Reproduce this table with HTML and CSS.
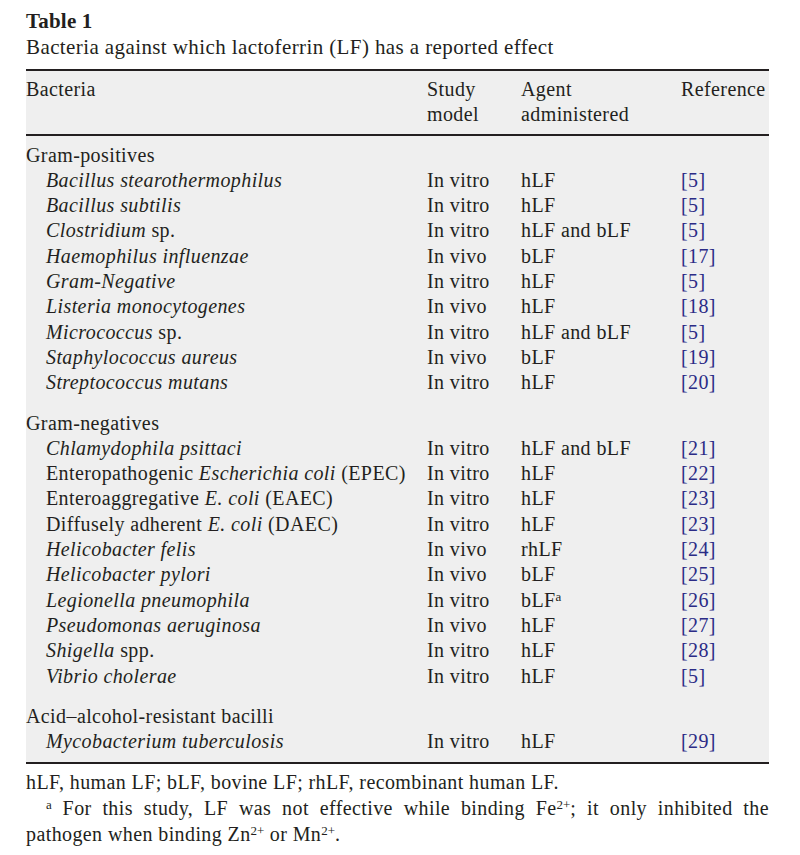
FILE: index.html
```html
<!DOCTYPE html>
<html>
<head>
<meta charset="utf-8">
<link rel="stylesheet" href="styles.css">
</head>
<body>
<div class="page">
  <div class="caption">
    <div class="label">Table 1</div>
    <div class="title">Bacteria against which lactoferrin (LF) has a reported effect</div>
  </div>
  <table class="tbl">
    <colgroup>
      <col class="c1"><col class="c2"><col class="c3"><col class="c4">
    </colgroup>
    <thead>
      <tr>
        <th>Bacteria</th>
        <th>Study<br>model</th>
        <th>Agent<br>administered</th>
        <th>Reference</th>
      </tr>
    </thead>
    <tbody>
      <tr class="grp first"><td>Gram-positives</td><td></td><td></td><td></td></tr>
      <tr><td class="sp"><i>Bacillus stearothermophilus</i></td><td>In vitro</td><td>hLF</td><td><span class="ref">[5]</span></td></tr>
      <tr><td class="sp"><i>Bacillus subtilis</i></td><td>In vitro</td><td>hLF</td><td><span class="ref">[5]</span></td></tr>
      <tr><td class="sp"><i>Clostridium</i> sp.</td><td>In vitro</td><td>hLF and bLF</td><td><span class="ref">[5]</span></td></tr>
      <tr><td class="sp"><i>Haemophilus influenzae</i></td><td>In vivo</td><td>bLF</td><td><span class="ref">[17]</span></td></tr>
      <tr><td class="sp"><i>Gram-Negative</i></td><td>In vitro</td><td>hLF</td><td><span class="ref">[5]</span></td></tr>
      <tr><td class="sp"><i>Listeria monocytogenes</i></td><td>In vivo</td><td>hLF</td><td><span class="ref">[18]</span></td></tr>
      <tr><td class="sp"><i>Micrococcus</i> sp.</td><td>In vitro</td><td>hLF and bLF</td><td><span class="ref">[5]</span></td></tr>
      <tr><td class="sp"><i>Staphylococcus aureus</i></td><td>In vivo</td><td>bLF</td><td><span class="ref">[19]</span></td></tr>
      <tr><td class="sp"><i>Streptococcus mutans</i></td><td>In vitro</td><td>hLF</td><td><span class="ref">[20]</span></td></tr>
      <tr class="grp"><td>Gram-negatives</td><td></td><td></td><td></td></tr>
      <tr><td class="sp"><i>Chlamydophila psittaci</i></td><td>In vitro</td><td>hLF and bLF</td><td><span class="ref">[21]</span></td></tr>
      <tr><td class="sp">Enteropathogenic <i>Escherichia coli</i> (EPEC)</td><td>In vitro</td><td>hLF</td><td><span class="ref">[22]</span></td></tr>
      <tr><td class="sp">Enteroaggregative <i>E. coli</i> (EAEC)</td><td>In vitro</td><td>hLF</td><td><span class="ref">[23]</span></td></tr>
      <tr><td class="sp">Diffusely adherent <i>E. coli</i> (DAEC)</td><td>In vitro</td><td>hLF</td><td><span class="ref">[23]</span></td></tr>
      <tr><td class="sp"><i>Helicobacter felis</i></td><td>In vivo</td><td>rhLF</td><td><span class="ref">[24]</span></td></tr>
      <tr><td class="sp"><i>Helicobacter pylori</i></td><td>In vivo</td><td>bLF</td><td><span class="ref">[25]</span></td></tr>
      <tr><td class="sp"><i>Legionella pneumophila</i></td><td>In vitro</td><td>bLF<sup class="fn">a</sup></td><td><span class="ref">[26]</span></td></tr>
      <tr><td class="sp"><i>Pseudomonas aeruginosa</i></td><td>In vivo</td><td>hLF</td><td><span class="ref">[27]</span></td></tr>
      <tr><td class="sp"><i>Shigella</i> spp.</td><td>In vitro</td><td>hLF</td><td><span class="ref">[28]</span></td></tr>
      <tr><td class="sp"><i>Vibrio cholerae</i></td><td>In vitro</td><td>hLF</td><td><span class="ref">[5]</span></td></tr>
      <tr class="grp"><td>Acid–alcohol-resistant bacilli</td><td></td><td></td><td></td></tr>
      <tr class="last"><td class="sp"><i>Mycobacterium tuberculosis</i></td><td>In vitro</td><td>hLF</td><td><span class="ref">[29]</span></td></tr>
    </tbody>
  </table>
  <div class="notes">
    <p class="abbr">hLF, human LF; bLF, bovine LF; rhLF, recombinant human LF.</p>
    <p class="foot"><sup class="fn">a</sup> For this study, LF was not effective while binding Fe<sup>2+</sup>; it only inhibited the pathogen when binding Zn<sup>2+</sup> or Mn<sup>2+</sup>.</p>
  </div>
  <div class="rule"></div>
</div>
</body>
</html>
```
FILE: styles.css
```css
html, body {
  margin: 0;
  padding: 0;
  background: #ffffff;
}
body {
  font-family: "Liberation Serif", "Times New Roman", serif;
  font-size: 20px;
  letter-spacing: 0.4px;
  color: #231f20;
}
.page {
  padding: 8px 31px 0 26px;
}
.caption {
  font-size: 21px;
  line-height: 26px;
}
.label {
  font-weight: bold;
  letter-spacing: 0.2px;
}
.title {
  margin-bottom: 9px;
}
.tbl {
  width: 743px;
  border-collapse: collapse;
  table-layout: fixed;
  background: #efefef;
  border-top: 2px solid #231f20;
  border-bottom: 2px solid #231f20;
  line-height: 25.3px;
}
.c1 { width: 401px; }
.c2 { width: 94px; }
.c3 { width: 160px; }
.c4 { width: 88px; }
.tbl th {
  font-weight: normal;
  text-align: left;
  vertical-align: top;
  padding: 6px 0 6px 0;
  border-bottom: 2px solid #231f20;
  white-space: nowrap;
}
.tbl td {
  padding: 0;
  white-space: nowrap;
  vertical-align: top;
}
.tbl tr.grp td {
  padding-top: 15px;
}
.tbl tr.grp.first td {
  padding-top: 7px;
}
.tbl tr.last td {
  padding-bottom: 8px;
}
.tbl td.sp {
  padding-left: 20px;
}
.ref {
  color: #2b2b86;
}
sup {
  font-size: 13px;
  line-height: 0;
  vertical-align: 6px;
  letter-spacing: 0;
}
.notes {
  margin-top: 5px;
  line-height: 26px;
}
.notes p {
  margin: 0;
}
.foot {
  text-indent: 20px;
  text-align: justify;
}
.rule {
  margin-top: 9px;
  height: 3px;
  background: #e8e8e8;
  margin-left: -26px;
  margin-right: -31px;
}
```
